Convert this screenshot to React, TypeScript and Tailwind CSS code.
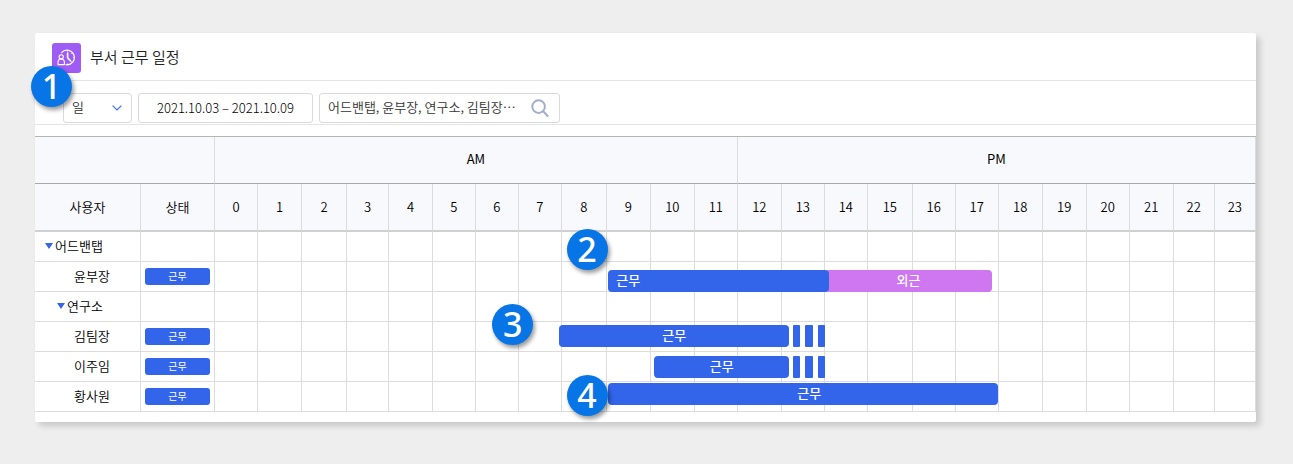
import React from "react";

type Bar = {
  label: string;
  start: number;
  end: number;
  color: string;
  align: string;
  top: string;
  overtime?: boolean;
};

type Row = {
  name: string;
  group?: boolean;
  indent: string;
  status?: string;
  bars?: Bar[];
  step?: { no: number; hour: number; top: string };
};

// column weights, the table stretches them to its own width
const USER_COL = 106;
const STATUS_COL = 74;
const HOUR_COLS = [
  43, 44, 45, 42, 44, 43, 43, 43, 45, 44, 44, 43,
  44, 43, 43, 45, 43, 43, 44, 44, 43, 44, 41, 41,
];
const TOTAL = USER_COL + STATUS_COL + HOUR_COLS.reduce((a, b) => a + b, 0);

const percent = (n: number) => `${(n / TOTAL) * 100}%`;

const hourToX = (hour: number) => {
  const whole = Math.floor(hour);
  const before = HOUR_COLS.slice(0, whole).reduce((a, b) => a + b, 0);
  return USER_COL + STATUS_COL + before + (hour - whole) * (HOUR_COLS[whole] || 0);
};

const rows: Row[] = [
  { name: "어드밴탭", group: true, indent: "pl-[10px]" },
  {
    name: "윤부장",
    indent: "pl-[39px]",
    status: "근무",
    step: { no: 2, hour: 8.1, top: "-top-[33px]" },
    bars: [
      { label: "외근", start: 14, end: 17.84, color: "bg-[#cf76f1]", align: "justify-center", top: "top-2" },
      { label: "근무", start: 9.03, end: 14.1, color: "bg-[#3265e9]", align: "pl-2", top: "top-2" },
    ],
  },
  { name: "연구소", group: true, indent: "pl-[22px]" },
  {
    name: "김팀장",
    indent: "pl-[39px]",
    status: "근무",
    step: { no: 3, hour: 6.38, top: "-top-[18px]" },
    bars: [
      { label: "근무", start: 7.93, end: 13.17, color: "bg-[#3265e9]", align: "justify-center", top: "top-[3px]", overtime: true },
    ],
  },
  {
    name: "이주임",
    indent: "pl-[39px]",
    status: "근무",
    bars: [
      { label: "근무", start: 10.07, end: 13.17, color: "bg-[#3265e9]", align: "justify-center", top: "top-1", overtime: true },
    ],
  },
  {
    name: "황사원",
    indent: "pl-[39px]",
    status: "근무",
    step: { no: 4, hour: 8.1, top: "-top-[7px]" },
    bars: [
      { label: "근무", start: 9.03, end: 17.98, color: "bg-[#3265e9]", align: "justify-center pl-3", top: "top-px" },
    ],
  },
];

const Step = ({ no }: { no: number }) => (
  <span className="flex h-[41px] w-[41px] items-center justify-center rounded-full bg-[#0875e6] pb-[2px] font-['Noto_Sans'] text-[34px] leading-none font-medium text-white shadow-[2px_3px_4px_rgba(0,0,0,0.4)]">
    {no}
  </span>
);

const LogoIcon = () => (
  <svg viewBox="0 0 29 30" className="h-[30px] w-[29px] rounded-[3px] bg-[#9f5cf4]" fill="none" stroke="#fff" strokeLinecap="round" strokeLinejoin="round">
    <path d="M9.6 9.6A7.3 7.3 0 1 1 14 21.7" strokeWidth="1.2" />
    <path d="M15.6 10v4.8l2.8 3" strokeWidth="1.6" />
    <path d="M15.6 7.6v.6M21.9 14.6h-.6M15.6 21.4v-.6M20 10.2l-.4.4M20 19l-.4-.4" strokeWidth="0.8" />
    <circle cx="9.2" cy="13.8" r="2.1" strokeWidth="1.1" />
    <path d="M6 21.6v-2.4a3.2 3.2 0 0 1 6.4 0v2.4z" strokeWidth="1.1" />
  </svg>
);

const App: React.FC = () => {
  return (
    <div className="min-h-screen bg-[#eeeeee] pt-[33px] pr-[37px] pb-10 pl-[35px] font-['Noto_Sans_CJK_KR',sans-serif] text-[13px] leading-5 font-[350] text-black">
      <main className="relative rounded-xs bg-white pb-[10px] shadow-[4px_4px_6px_rgba(0,0,0,0.16)]">
        {/* Title */}
        <header className="flex h-12 items-center gap-[9px] border-b border-[#e4e4e4] pt-[2px] pl-[17px]">
          <LogoIcon />
          <h1 className="pb-[2px] text-[15px] font-[350] text-[#222222]">부서 근무 일정</h1>
        </header>

        {/* Filters */}
        <form className="flex h-11 items-end gap-[6px] border-b border-[#e4e4e4] pb-px pl-7 text-[#333333]">
          <div className="relative">
            <select aria-label="기간 단위" className="h-[30px] w-[69px] appearance-none rounded-[3px] border border-[#d9d9d9] bg-white pb-[2px] pl-2">
              <option>일</option>
            </select>
            <svg viewBox="0 0 10 6" className="pointer-events-none absolute top-3 right-[10px] h-[6px] w-[10px]" fill="none" stroke="#3b6df0" strokeWidth="1.2">
              <path d="M.6.6 5 5 9.4.6" />
            </svg>
          </div>
          <input
            aria-label="기간"
            defaultValue="2021.10.03 – 2021.10.09"
            className="h-[30px] w-[175px] rounded-[3px] border border-[#d9d9d9] pb-[2px] text-center font-light text-black"
          />
          <div className="flex h-[30px] w-[241px] items-center rounded-[3px] border border-[#d9d9d9] pr-[10px] pl-2">
            <input aria-label="사용자 검색" defaultValue="어드밴탭, 윤부장, 연구소, 김팀장⋯" className="min-w-0 flex-1 pb-[2px]" />
            <button type="button" aria-label="검색">
              <svg viewBox="0 0 18 18" className="h-[18px] w-[18px]" fill="none" stroke="#a3aecb" strokeWidth="2" strokeLinecap="round">
                <circle cx="7.6" cy="7.6" r="6.3" />
                <path d="m12.2 12.2 4.4 4.8" />
              </svg>
            </button>
          </div>
        </form>

        {/* Schedule */}
        <table className="mt-[11px] w-full table-fixed border-separate border-spacing-0 border-t border-[#b5b5b5]">
          <colgroup>
            <col style={{ width: percent(USER_COL) }} />
            <col style={{ width: percent(STATUS_COL) }} />
            {HOUR_COLS.map((w, i) => (
              <col key={i} style={{ width: percent(w) }} />
            ))}
          </colgroup>
          <thead className="bg-[#f8f9fd]">
            <tr className="h-[47px]">
              <td colSpan={2} className="border-r border-b border-r-[#dcdcdc] border-b-[#a5a7ab]"></td>
              {["AM", "PM"].map((half) => (
                <th key={half} colSpan={12} className="border-r border-b border-r-[#dcdcdc] border-b-[#a5a7ab] px-0 pt-0 pb-[2px] font-normal">
                  {half}
                </th>
              ))}
            </tr>
            <tr className="h-12">
              {["사용자", "상태", ...HOUR_COLS.map((_, i) => String(i))].map((title) => (
                <th key={title} className="border-r border-b-2 border-r-[#dcdcdc] border-b-[#cfd0d2] p-0 font-[350]">
                  {title}
                </th>
              ))}
            </tr>
          </thead>
          <tbody>
            {rows.map((row) => (
              <tr key={row.name} className="relative h-[30px]">
                <th className={`border-r border-b border-[#dcdcdc] pt-0 pr-0 pb-[2px] text-left font-[350] ${row.indent}`}>
                  {row.group ? (
                    <button type="button" className="flex items-center gap-[2px]">
                      <span className="border-x-4 border-t-[6px] border-x-transparent border-t-[#3265e9]"></span>
                      {row.name}
                    </button>
                  ) : (
                    row.name
                  )}
                </th>
                <td className="border-r border-b border-[#dcdcdc] px-1 py-0">
                  {row.status && (
                    <span className="block h-[17px] rounded-[3px] bg-[#3265e9] text-center text-[10px] leading-4 font-normal text-white">
                      {row.status}
                    </span>
                  )}
                </td>
                {HOUR_COLS.map((_, i) => (
                  <td key={i} className="border-r border-b border-[#dcdcdc] p-0">
                    {i === 0 &&
                      row.bars?.map((bar) => (
                        <div
                          key={bar.label}
                          className={`absolute flex h-[22px] items-center rounded-[4px] leading-[22px] font-medium text-white ${bar.color} ${bar.align} ${bar.top}`}
                          style={{
                            left: percent(hourToX(bar.start)),
                            width: percent(hourToX(bar.end) - hourToX(bar.start)),
                          }}
                        >
                          <span className="pb-[2px]">{bar.label}</span>
                          {bar.overtime && (
                            <div className="absolute left-full flex gap-[5px] pl-1">
                              <i className="h-[22px] w-[7px] rounded-[1px] bg-[#3265e9]"></i>
                              <i className="h-[22px] w-2 rounded-[1px] bg-[#3265e9]"></i>
                              <i className="h-[22px] w-[7px] rounded-[1px] bg-[#3265e9]"></i>
                            </div>
                          )}
                        </div>
                      ))}
                    {i === 0 && row.step && (
                      <div className={`absolute z-10 ${row.step.top}`} style={{ left: percent(hourToX(row.step.hour)) }}>
                        <Step no={row.step.no} />
                      </div>
                    )}
                  </td>
                ))}
              </tr>
            ))}
          </tbody>
        </table>

        <div className="absolute top-[33px] -left-1">
          <Step no={1} />
        </div>
      </main>
    </div>
  );
};

export default App;
